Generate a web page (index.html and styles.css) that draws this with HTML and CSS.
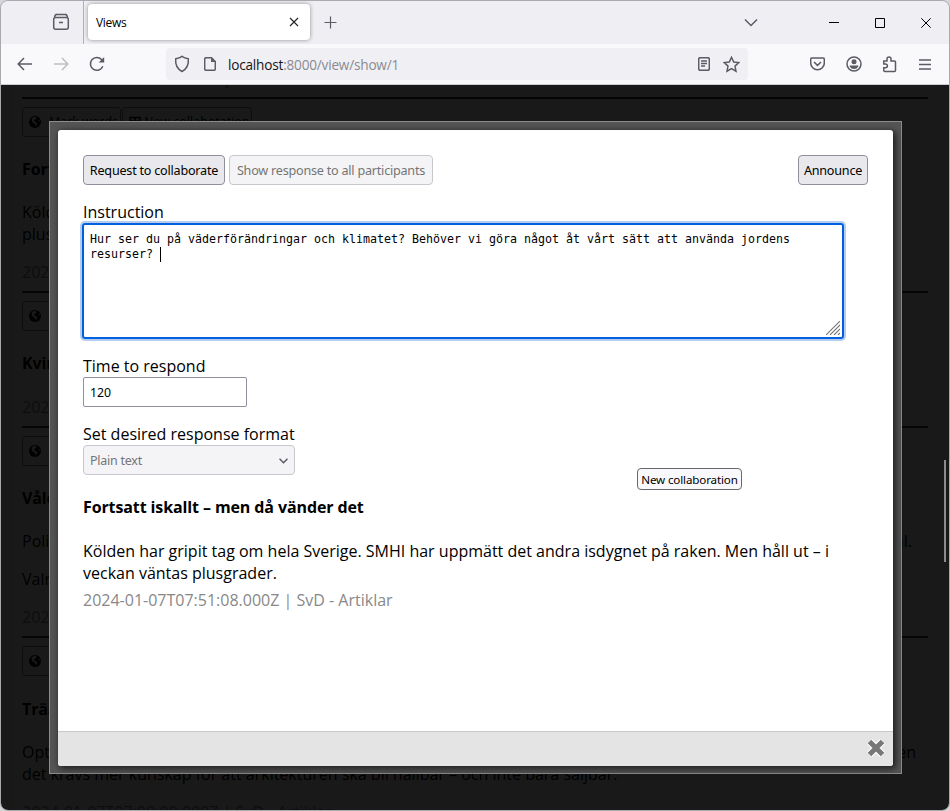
FILE: index.html
```html
<!DOCTYPE html>
<html lang="sv">
<head>
<meta charset="utf-8">
<title>Views</title>
<link rel="stylesheet" href="styles.css">
</head>
<body>
<div class="window">
  <header class="tabbar">
    <div class="firefox-view"><svg width="18" height="18" viewBox="0 0 18 18"><path d="M3.500 1.400h11"/><rect x="1.700" y="4.600" width="14.600" height="11.600" rx="2"/><path d="M2.500 4.200c.4-1.600 1-2.700 2-2.700M15.500 4.200c-.4-1.600-1-2.700-2-2.700M7 9.400h4"/></svg></div>
    <div class="tab"><span>Views</span><svg class="dark" width="10" height="10" viewBox="0 0 10 10"><path d="M1 1l8 8M9 1L1 9"/></svg></div>
    <svg class="plus" width="13" height="13" viewBox="0 0 13 13"><path d="M6.500 .5v12M.5 6.500h12"/></svg>
    <svg class="tabs-menu" width="14" height="9" viewBox="0 0 14 9"><path d="M1 1.500l6 6 6-6"/></svg>
    <svg class="win min" width="10" height="11" viewBox="0 0 10 11"><path d="M0 5.500h10"/></svg>
    <svg class="win max" width="10" height="10" viewBox="0 0 10 10"><path d="M.5 .5h9v9h-9z"/></svg>
    <svg class="win quit" width="10" height="10" viewBox="0 0 10 10"><path d="M.3 .3l9.400 9.400M9.700 .3L.3 9.700"/></svg>
  </header>
  <nav class="navbar">
    <svg class="back" width="16" height="14" viewBox="0 0 16 14"><path d="M15 7H1.500M7 1L1.200 7 7 13"/></svg>
    <svg class="forward" width="16" height="14" viewBox="0 0 16 14"><path d="M1 7h13.500M9 1l5.800 6L9 13"/></svg>
    <svg class="reload" width="16" height="16" viewBox="0 0 16 16"><path d="M13.800 10.200A6.400 6.400 0 1 1 12.600 3.600L14 5"/><path class="fill" d="M15.200 1v5.500H9.700z"/></svg>
    <div class="urlbar">
      <svg class="shield" width="16" height="18" viewBox="0 0 16 18"><path d="M8 1.300c1.800 1.300 3.800 2 6.300 2.500.5 5.500-1.500 10.200-6.300 12.700C3.200 14 1.200 9.300 1.700 3.800 4.200 3.300 6.200 2.600 8 1.300z"/></svg>
      <svg class="page-icon" width="12" height="14" viewBox="0 0 12 14"><path d="M2 .7h5.500L11.300 4.500V12a1.300 1.300 0 0 1-1.300 1.300H2A1.300 1.300 0 0 1 .7 12V2A1.300 1.300 0 0 1 2 .7z"/><path class="fill" d="M7 .7V5h4.300z"/></svg>
      <span class="url"><b>localhost</b>:8000/view/show/1</span>
      <svg class="reader" width="12" height="14" viewBox="0 0 12 14"><rect x=".7" y=".7" width="10.600" height="12.600" rx="1.500"/><path d="M3 4h6M3 6.500h6M3 9h4"/></svg>
      <svg class="star" width="17" height="17" viewBox="0 0 17 17"><path d="M8.500 1.300l2.200 4.700 5 .6-3.700 3.500 1 5.100-4.500-2.500L4 15.200l1-5.100L1.300 6.600l5-.6z"/></svg>
    </div>
    <svg class="pocket" width="15" height="14" viewBox="0 0 15 14"><path d="M2 1h11q1.300 0 1.300 1.300V6A6.800 6.800 0 0 1 .7 6V2.300Q.7 1 2 1zM4 5l3.500 3.400L11 5"/></svg>
    <svg class="account" width="16" height="16" viewBox="0 0 16 16"><circle cx="8" cy="8" r="7"/><circle class="fill" cx="8" cy="5.700" r="2.500"/><path class="fill" d="M3.700 9.400h8.600v1A4.800 4.800 0 0 1 8 12.900a4.800 4.800 0 0 1-4.300-2.500z"/></svg>
    <svg class="puzzle" width="15" height="17" viewBox="0 0 15 17"><path d="M1.800 5H5V3a2 2 0 0 1 4 0v2h3.500q1 0 1 1v8.500q0 1-1 1H2.800q-1 0-1-1v-2.800H3.500a1.900 1.900 0 0 0 0-3.800H1.800z"/></svg>
    <svg class="burger" width="12" height="11" viewBox="0 0 12 11"><path d="M0 1h12M0 5.500h12M0 10h12"/></svg>
  </nav>

  <main class="viewport">
    <div class="feed">
      <div class="date first">2024-01-07T07:51:08.000Z | SvD - </div>
      <article>
        <div class="tools"><span class="tool"><svg width="12" height="12" viewBox="0 0 12 12"><circle cx="6" cy="6" r="6"/><path d="M4.500 1l2.500 0 .5 1.500-2.500 2 1 1.500 2.500 1-1.500 3.500-1-2.500L3 6 2.500 3zM9.500 3l1.500 2-1 1z"/></svg>Mark words</span><span class="tool wide"><svg class="line" width="12" height="12" viewBox="0 0 12 12"><path d="M1 1.500h10v9H1zM6 1.500v9M1 5h10"/></svg>New collabotation</span></div>
        <h2>Fort</h2>
        <p>Köld<br>plus</p>
        <div class="date">2024</div>
      </article>
      <article>
        <div class="tools"><span class="tool"><svg width="12" height="12" viewBox="0 0 12 12"><circle cx="6" cy="6" r="6"/><path d="M4.500 1l2.500 0 .5 1.500-2.500 2 1 1.500 2.500 1-1.500 3.500-1-2.500L3 6 2.500 3zM9.500 3l1.500 2-1 1z"/></svg></span></div>
        <h2>Kvin</h2>
        <div class="date">2024</div>
      </article>
      <article>
        <div class="tools"><span class="tool"><svg width="12" height="12" viewBox="0 0 12 12"><circle cx="6" cy="6" r="6"/><path d="M4.500 1l2.500 0 .5 1.500-2.500 2 1 1.500 2.500 1-1.500 3.500-1-2.500L3 6 2.500 3zM9.500 3l1.500 2-1 1z"/></svg></span></div>
        <h2>Våld</h2>
        <p class="split"><span>Poli</span><span class="tail">al.</span></p>
        <p>Valr</p>
        <div class="date">2024</div>
      </article>
      <article>
        <div class="tools"><span class="tool"><svg width="12" height="12" viewBox="0 0 12 12"><circle cx="6" cy="6" r="6"/><path d="M4.500 1l2.500 0 .5 1.500-2.500 2 1 1.500 2.500 1-1.500 3.500-1-2.500L3 6 2.500 3zM9.500 3l1.500 2-1 1z"/></svg></span></div>
        <h2>Träa</h2>
        <p><span class="split"><span>Opt</span><span class="tail">en</span></span>det krävs mer kunskap för att arkitekturen ska bli hållbar – och inte bara säljbar.</p>
        <div class="date">2024-01-07T07:00:00.000Z | SvD - Artiklar</div>
      </article>
    </div>
    <div class="overlay"></div>
    <div class="scroll-thumb"></div>
    <div class="modal-frame">
      <section class="modal">
        <div class="modal-body">
          <div class="actions">
            <button class="btn request">Request to collaborate</button>
            <button class="btn show" disabled>Show response to all participants</button>
            <button class="btn announce">Announce</button>
          </div>
          <label>Instruction</label>
          <div class="textarea">Hur ser du på väderförändringar och klimatet? Behöver vi göra något åt vårt sätt att använda jordens<br>resurser? <i class="caret"></i><svg class="grip" width="14" height="14" viewBox="0 0 14 14"><path d="M0 14L14 0M4 14L14 4M8 14l6-6M12 14l2-2"/></svg></div>
          <label>Time to respond</label>
          <div class="input">120</div>
          <label>Set desired response format</label>
          <div class="select"><span>Plain text</span><svg width="9" height="6" viewBox="0 0 9 6"><path d="M.5 .8l4 4 4-4"/></svg></div>
          <h2>Fortsatt iskallt – men då vänder det</h2>
          <p>Kölden har gripit tag om hela Sverige. SMHI har uppmätt det andra isdygnet på raken. Men håll ut – i<br>veckan väntas plusgrader.</p>
          <div class="stamp">2024-01-07T07:51:08.000Z | SvD - Artiklar</div>
        </div>
        <footer><svg width="20" height="20" viewBox="0 0 20 20"><path class="halo" d="M3.500 3.500l13 13M16.500 3.500l-13 13"/><path d="M3.500 3.500l13 13M16.500 3.500l-13 13"/></svg></footer>
      </section>
    </div>
    <div class="tooltip">New collaboration</div>
  </main>
</div>
</body>
</html>
```
FILE: styles.css
```css
* { box-sizing: border-box; }
body { margin: 0; background: #d5d5dc; font: 16px/22px "Open Sans", sans-serif; color: #000; overflow: hidden; }
svg { display: block; flex: none; fill: none; stroke: #5b5b66; stroke-width: 1.5; }
.fill { fill: #5b5b66; stroke: none; }
.window { width: 950px; height: 811px; border: 1px solid #a9a9ae; border-radius: 8px; overflow: hidden; display: flex; flex-direction: column; }

.tabbar { height: 43px; flex: none; background: #efeef3; display: flex; align-items: center; }
.firefox-view { width: 83px; height: 43px; padding: 12px 0 0 51px; border-right: 1px solid #b0b0b5; }
.tab { width: 222px; height: 36px; margin: -1px 0 0 4px; padding: 0 11px 0 8px; background: #fff; border-radius: 4px; box-shadow: 0 0 4px rgba(0,0,0,.4); display: flex; align-items: center; justify-content: space-between; font-size: 12px; }
.tab span { letter-spacing: -.3px; padding-top: 2px; }
.dark { stroke: #222; stroke-width: 1.1; }
.plus { margin-left: 14px; stroke-width: 1.2; }
.tabs-menu { margin-left: 407px; margin-top: -1px; }
.win { stroke: #000; stroke-width: 1; }
.min { margin-left: 71px; }
.max { margin-left: 36px; }
.quit { margin-left: 36px; }

.navbar { height: 41px; flex: none; background: #f9f9fb; border-bottom: 1px solid #ccccd1; display: flex; align-items: center; }
.back { margin-left: 16px; }
.forward { margin-left: 20px; stroke: #bdbdc3; }
.reload { margin-left: 20px; }
.urlbar { width: 582px; height: 32px; margin-left: 61px; padding-left: 8px; background: #f0f0f4; border-radius: 4px; display: flex; align-items: center; }
.page-icon { margin-left: 14px; }
.url { margin-left: 12px; width: 470px; font-size: 13.600px; letter-spacing: -.2px; color: #8a8a92; padding-top: 2px; }
.url b { font-weight: 400; color: #15141a; }
.star { margin-left: 13px; }
.pocket { margin-left: 62px; margin-top: -1px; }
.account { margin-left: 21px; }
.puzzle { margin-left: 20px; }
.burger { margin-left: 22px; }

.viewport { position: relative; flex: 1; min-height: 0; overflow: hidden; background: #fff; }
.feed { margin: 0 10px; padding: 0 10px; border: solid #ddd; border-width: 0 1px; border-style: dotted; }
.feed h2 { margin: 21px 0; font-size: 16px; line-height: 22px; letter-spacing: -.11px; }
article:nth-of-type(4) h2 { margin-top: 22px; }
.feed p { margin: 0 0 16px; white-space: nowrap; }
.feed h2 + .date { margin-top: 22px; }
.feed .date { color: #888; padding-bottom: 8px; height: 30px; }
.feed .date.first { margin-top: -18px; color: #555; }
article { border-top: 2px solid #333; padding-top: 8px; }
.tools { display: flex; height: 30px; gap: 1px; }
.tool { width: 99px; height: 30px; padding-left: 6px; border: 1px solid #888; border-radius: 3px; font-size: 12.500px; display: flex; align-items: center; gap: 8px; white-space: nowrap; }
.tool.wide { width: 130px; gap: 3px; }
.tool svg circle { fill: #000; stroke: none; }
.tool svg path { fill: #fff; stroke: none; }
.tool .line path { stroke: #000; fill: none; }
.split { display: flex; justify-content: space-between; }
.tail { padding-right: 12px; }
p.split .tail { padding-right: 16px; }
.overlay { position: absolute; inset: 0; background: rgba(0,0,0,.9); }
.scroll-thumb { position: absolute; left: 943px; top: 375px; width: 2px; height: 102px; background: #8b8b8b; }

.modal-frame { position: absolute; left: 48px; top: 36px; width: 853px; height: 653px; padding: 8px; border: 1px solid #8c8c8c; background: #555; }
.modal { width: 835px; height: 636px; background: #fff; border-radius: 3px; box-shadow: 2px 2px 7px 1px rgba(0,0,0,.65); display: flex; flex-direction: column; overflow: hidden; }
.modal-body { flex: 1; padding: 25px; }
.actions { display: flex; gap: 4px; margin-bottom: 16px; }
.btn, .input, .select, .tooltip { font-family: "Noto Sans", sans-serif; }
.btn { height: 30px; padding: 0; border: 1px solid #8f8f9d; border-radius: 4px; background: #e9e9ed; font-size: 12.600px; letter-spacing: -.22px; color: #000; white-space: nowrap; }
.request { width: 142px; }
.show { width: 204px; background: #f4f4f6; border-color: #c7c7ce; color: #747474; }
.announce { width: 70px; margin-left: auto; }
label { display: block; }
.textarea { position: relative; width: 762px; height: 116px; margin: 0 0 16px -1px; padding: 7px 0 0 6px; border: 2px solid #0060df; border-radius: 3px; box-shadow: 0 0 0 2px #b3ccf0; font: 11.630px/15px "DejaVu Sans Mono", monospace; white-space: pre; }
.caret { display: inline-block; width: 1px; height: 15px; background: #000; vertical-align: top; }
.grip { position: absolute; right: 2px; bottom: 2px; stroke: #777; stroke-width: 1.1; }
.input { width: 164px; height: 30px; margin-bottom: 16px; padding-left: 6px; border: 1px solid #8f8f9d; border-radius: 2px; font-size: 12.300px; line-height: 29px; }
.select { width: 212px; height: 30px; padding: 1px 6px 0; border: 1px solid #c7c7ce; border-radius: 4px; background: #f4f4f6; color: #747474; font-size: 12.500px; letter-spacing: -.25px; display: flex; align-items: center; justify-content: space-between; }
.modal h2 { margin: 21px 0 22px; font-size: 16px; line-height: 22px; letter-spacing: -.11px; }
.modal p { margin: 0 0 5px; white-space: nowrap; }
.stamp { color: #888; }
footer { height: 35px; flex: none; background: #e4e4e4; border-top: 1px solid #c8c8c8; padding: 6px 7px 0 0; display: flex; justify-content: flex-end; }
footer svg { stroke: #777; stroke-width: 5; }
footer .halo { stroke: #fff; stroke-width: 7; }
.tooltip { position: absolute; left: 636px; top: 383px; width: 105px; height: 22px; border: 1px solid #67676c; border-radius: 4px; background: #f9f9fb; font-size: 11.600px; letter-spacing: -.14px; line-height: 22px; text-align: center; white-space: nowrap; }
```
